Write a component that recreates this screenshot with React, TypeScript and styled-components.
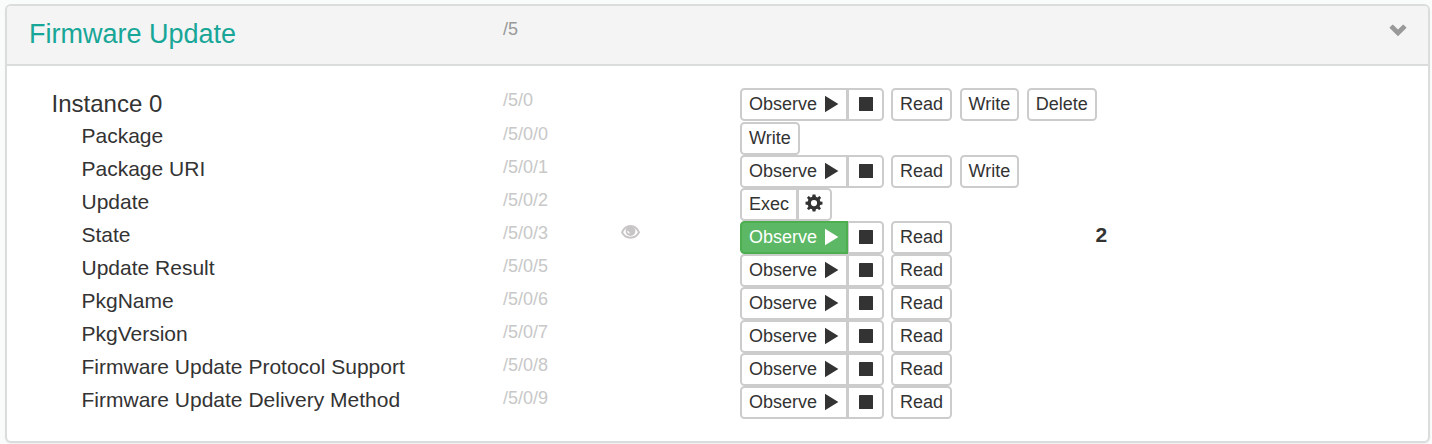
import React from 'react';
import styled, { createGlobalStyle, css } from 'styled-components';

const Global = createGlobalStyle`
  * { box-sizing: border-box; }
  body {
    margin: 0;
    background: #fafcfb;
    color: #333;
    font-family: "Liberation Sans", Arial, sans-serif;
    overflow: hidden;
  }
`;

const Page = styled.div`
  height: 444px;
  padding: 4px 2px 1px 5px;
`;

const Panel = styled.section`
  height: 439px;
  border: 2px solid #dbdcdc;
  border-radius: 6px;
  background: #fff;
  box-shadow: 0 1px 2px rgba(0, 0, 0, 0.05);
  overflow: hidden;
`;

const columns = css`
  display: grid;
  grid-template-columns: 496px 118px 119px 355.5px 1fr;
  align-items: start;
`;

const Header = styled.header`
  ${columns}
  height: 60px;
  background: #f4f4f4;
  border-bottom: 2px solid #dbdcdc;
`;

const Title = styled.h1`
  margin: 0;
  padding: 13px 0 0 22px;
  font-size: 27px;
  line-height: 30px;
  font-weight: 400;
  color: #17a697;
`;

const HeaderPath = styled.span`
  padding-top: 13px;
  font-size: 18px;
  line-height: 20px;
  color: #999;
`;

const Toggle = styled.div`
  grid-column: 5;
  justify-self: end;
  padding: 18px 21px 0 0;
  svg { display: block; }
`;

const Body = styled.div`
  padding-top: 22px;
`;

const Row = styled.div<{ $head?: boolean }>`
  ${columns}
  height: ${p => (p.$head ? 34 : 33)}px;
`;

const Name = styled.span<{ $head?: boolean }>`
  padding-left: ${p => (p.$head ? 44.5 : 74.5)}px;
  padding-top: ${p => (p.$head ? 2 : 0)}px;
  font-size: ${p => (p.$head ? 24 : 21)}px;
  line-height: 28px;
  white-space: nowrap;
`;

const Path = styled.span`
  padding-top: 2px;
  font-size: 18px;
  line-height: 20px;
  color: #c8c8c8;
`;

const Watch = styled.span`
  padding-top: 3px;
  svg { display: block; }
`;

const Actions = styled.div`
  display: flex;
  gap: 7.5px;
`;

const Group = styled.div`
  display: flex;
`;

const Button = styled.button<{ $active?: boolean }>`
  display: flex;
  align-items: center;
  gap: 7px;
  height: 33px;
  margin: 0;
  padding: 0 7px;
  border: 2px solid #ccc;
  border-radius: 4.5px;
  background: #fff;
  color: #333;
  font: 18px/27px "Liberation Sans", Arial, sans-serif;
  svg { display: block; margin-bottom: 2px; }
  ${Group} &:first-child {
    border-top-right-radius: 0;
    border-bottom-right-radius: 0;
  }
  ${Group} &:last-child {
    margin-left: -1px;
    padding-left: 7.5px;
    border-top-left-radius: 0;
    border-bottom-left-radius: 0;
  }
  ${p => p.$active && css`
    position: relative;
    z-index: 1;
    background: #5cb865;
    border-color: #4cae4f;
    color: #fff;
  `}
`;

const SettingsButton = styled(Button)`
  ${Group} &:last-child {
    padding: 0 6.75px 0 6.25px;
  }
  svg { margin-bottom: 3px; }
`;

const Value = styled.strong`
  padding-top: 1px;
  font-size: 21px;
  line-height: 26px;
`;

const PlayIcon = () => (
  <svg width="15" height="18" viewBox="0 0 15 18" fill="currentColor">
    <path d="M1 .7 14.4 9 1 17.3Z" />
  </svg>
);

const StopIcon = () => (
  <svg width="18" height="18" viewBox="0 0 18 18" fill="currentColor">
    <rect x="2" y="2" width="14" height="14" rx=".6" />
  </svg>
);

const GearIcon = () => (
  <svg width="18" height="18" viewBox="0 0 18 18" fill="currentColor">
    <path
      fillRule="evenodd"
      d="M7.6.5h2.800l.5 2.300 1.500.7 2-1.400 1.700 1.700-1.400 2 .6 1.600 2.200.4v2.700l-2.300.4-.6 1.500 1.400 2-1.700 1.700-2-1.400-1.400.6-.5 2.200H7.600l-.5-2.200-1.400-.6-2 1.400L2 14.400l1.400-2-.6-1.500-2.300-.4V7.800l2.200-.4.7-1.600L2 3.800l1.700-1.700 2 1.400 1.400-.7ZM9 6a3.100 3.100 0 1 0 0 6.200A3.100 3.100 0 0 0 9 6Z"
    />
  </svg>
);

const EyeIcon = () => (
  <svg width="19" height="16" viewBox="0 0 19 16">
    <path d="M1 8.300C4.700-.2 14.300-.2 18 8.300 14.300 15.500 4.700 15.500 1 8.300Z" fill="none" stroke="#c8c6c5" strokeWidth="1.900" />
    <circle cx="9.500" cy="7" r="4.900" fill="#c8c6c5" />
    <path d="M6 6.800 7.300 7.200 8.500 8.300 8.300 9.700Q6.500 9.200 6 6.800Z" fill="#fff" />
  </svg>
);

const ChevronIcon = () => (
  <svg width="18" height="13" viewBox="0 0 18 13">
    <path d="M.4 3.700 3.300.8Q3.700.5 4.100.8L9 5.600 13.900.8Q14.300.5 14.700.8L17.600 3.700 9 12.300Z" fill="#999" />
  </svg>
);

type Action = 'observe' | 'read' | 'write' | 'delete' | 'exec';

interface Resource {
  name: string;
  path: string;
  actions: Action[];
  observed?: boolean;
  value?: string;
}

const resources: Resource[] = [
  { name: 'Instance 0', path: '/5/0', actions: ['observe', 'read', 'write', 'delete'] },
  { name: 'Package', path: '/5/0/0', actions: ['write'] },
  { name: 'Package URI', path: '/5/0/1', actions: ['observe', 'read', 'write'] },
  { name: 'Update', path: '/5/0/2', actions: ['exec'] },
  { name: 'State', path: '/5/0/3', actions: ['observe', 'read'], observed: true, value: '2' },
  { name: 'Update Result', path: '/5/0/5', actions: ['observe', 'read'] },
  { name: 'PkgName', path: '/5/0/6', actions: ['observe', 'read'] },
  { name: 'PkgVersion', path: '/5/0/7', actions: ['observe', 'read'] },
  { name: 'Firmware Update Protocol Support', path: '/5/0/8', actions: ['observe', 'read'] },
  { name: 'Firmware Update Delivery Method', path: '/5/0/9', actions: ['observe', 'read'] },
];

const labels = { read: 'Read', write: 'Write', delete: 'Delete' };

function ActionControl({ action, active }: { action: Action; active?: boolean }) {
  if (action === 'observe') {
    return (
      <Group>
        <Button $active={active}>Observe<PlayIcon /></Button>
        <Button aria-label="Stop observing"><StopIcon /></Button>
      </Group>
    );
  }
  if (action === 'exec') {
    return (
      <Group>
        <Button>Exec</Button>
        <SettingsButton aria-label="Settings"><GearIcon /></SettingsButton>
      </Group>
    );
  }
  return <Button>{labels[action]}</Button>;
}

export default function App() {
  return (
    <Page>
      <Global />
      <Panel>
        <Header>
          <Title>Firmware Update</Title>
          <HeaderPath>/5</HeaderPath>
          <Toggle><ChevronIcon /></Toggle>
        </Header>
        <Body>
          {resources.map((r, i) => (
            <Row key={r.path} $head={i === 0}>
              <Name $head={i === 0}>{r.name}</Name>
              <Path>{r.path}</Path>
              <Watch>{r.observed && <EyeIcon />}</Watch>
              <Actions>
                {r.actions.map(a => <ActionControl key={a} action={a} active={r.observed} />)}
              </Actions>
              {r.value && <Value>{r.value}</Value>}
            </Row>
          ))}
        </Body>
      </Panel>
    </Page>
  );
}
